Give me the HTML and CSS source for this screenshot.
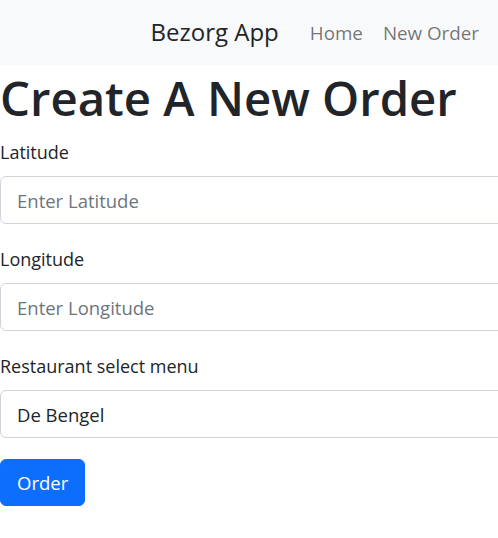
FILE: index.html
```html
<!DOCTYPE html>
<html lang="en">
<head>
<meta charset="utf-8">
<title>Bezorg App</title>
<link rel="stylesheet" href="styles.css">
</head>
<body>
<nav class="navbar">
  <a class="brand" href="#">Bezorg App</a>
  <ul class="nav">
    <li><a class="nav-link" href="#">Home</a></li>
    <li><a class="nav-link" href="#">New Order</a></li>
  </ul>
</nav>
<main class="page">
  <h1 class="title">Create A New Order</h1>
  <form class="form">
    <div class="field">
      <label class="label" for="lat">Latitude</label>
      <input class="control" id="lat" type="text" placeholder="Enter Latitude">
    </div>
    <div class="field">
      <label class="label" for="lng">Longitude</label>
      <input class="control" id="lng" type="text" placeholder="Enter Longitude">
    </div>
    <div class="field field-last">
      <label class="label" for="rest">Restaurant select menu</label>
      <select class="control select" id="rest">
        <option>De Bengel</option>
      </select>
    </div>
    <button class="btn" type="button">Order</button>
  </form>
</main>
</body>
</html>
```

FILE: styles.css
```css
* { box-sizing: border-box; }
html, body { margin: 0; padding: 0; }
body {
  font-family: "Open Sans", "Noto Sans", sans-serif;
  color: #212529;
  background: #fff;
  overflow: hidden;
}
.navbar {
  height: 65px;
  background: #f8f9fa;
  display: flex;
  align-items: center;
  justify-content: flex-end;
  padding-right: 9px;
}
.brand {
  font-size: 24px;
  color: #212529;
  text-decoration: none;
  margin-right: 21px;
  margin-bottom: 2px;
}
.nav {
  list-style: none;
  margin: 0;
  padding: 0;
  display: flex;
}
.nav-link {
  display: block;
  padding: 8px 10px;
  font-size: 18.8px;
  color: rgba(0,0,0,.55);
  text-decoration: none;
}
.page { overflow: hidden; }
.title {
  font-size: 47.3px;
  font-weight: 600;
  line-height: 58px;
  margin: 4px 0 12px;
  white-space: nowrap;
}
.field { margin-bottom: 22px; }
.field-last { margin-bottom: 21px; }
.label {
  display: block;
  font-size: 18px;
  line-height: 27px;
  margin-bottom: 10px;
}
.control {
  display: block;
  width: 520px;
  height: 48px;
  padding: 0 16px;
  font-family: inherit;
  font-size: 18.5px;
  color: #212529;
  background: #fff;
  border: 1px solid #ced4da;
  border-radius: 6px;
  appearance: none;
  outline: none;
}
.control::placeholder { color: #6c757d; }
.btn {
  display: block;
  height: 47px;
  padding: 0 16px;
  font-family: inherit;
  font-size: 18.5px;
  color: #fff;
  background: #0d6efd;
  border: 1px solid #0d6efd;
  border-radius: 6px;
}
```
